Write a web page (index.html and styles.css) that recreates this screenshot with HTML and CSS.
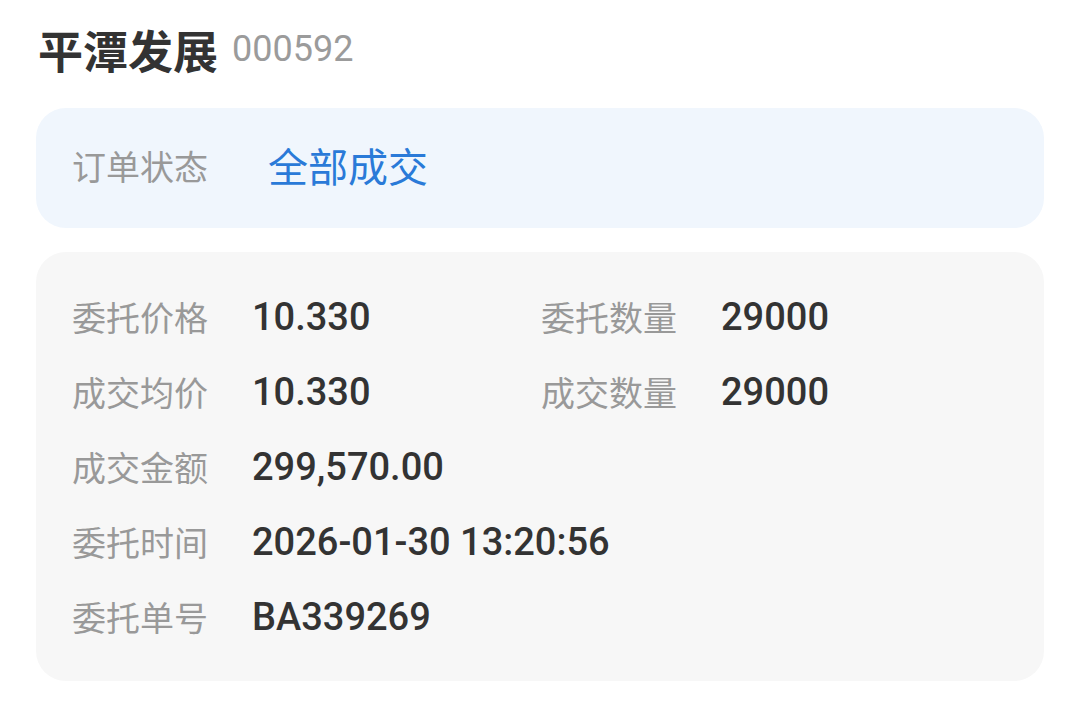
FILE: index.html
```html
<!DOCTYPE html>
<html>
<head>
  <meta charset="utf-8">
  <title>委托详情</title>
  <link rel="stylesheet" href="styles.css">
</head>
<body>

  <div class="stock-title">
    <span class="stock-name">平潭发展</span>
    <span class="stock-code">000592</span>
  </div>

  <div class="status-card">
    <span class="label">订单状态</span>
    <span class="status-value">全部成交</span>
  </div>

  <div class="detail-card">
    <div class="row">
      <div class="item"><span class="label">委托价格</span><span class="value">10.330</span></div>
      <div class="item"><span class="label">委托数量</span><span class="value">29000</span></div>
    </div>
    <div class="row">
      <div class="item"><span class="label">成交均价</span><span class="value">10.330</span></div>
      <div class="item"><span class="label">成交数量</span><span class="value">29000</span></div>
    </div>
    <div class="row">
      <div class="item"><span class="label">成交金额</span><span class="value">299,570.00</span></div>
    </div>
    <div class="row">
      <div class="item"><span class="label">委托时间</span><span class="value">2026-01-30 13:20:56</span></div>
    </div>
    <div class="row">
      <div class="item"><span class="label">委托单号</span><span class="value">BA339269</span></div>
    </div>
  </div>

</body>
</html>
```

FILE: styles.css
```css
body {
  margin: 0;
  padding: 19px 36px 0;
  background-color: #ffffff;
  font-family: Roboto, "Noto Sans CJK SC", sans-serif;
  color: #333;
}

.stock-title {
  display: flex;
  align-items: center;
  height: 60px;
  padding-left: 2px;
}

.stock-name {
  font-size: 45px;
  font-weight: bold;
  color: #333;
}

.stock-code {
  margin-left: 14px;
  font-size: 36px;
  color: #9b9b9b;
}

.status-card {
  display: flex;
  align-items: center;
  height: 120px;
  box-sizing: border-box;
  margin-top: 29px;
  padding: 0 36px 6px;
  background-color: #f0f6fd;
  border-radius: 30px;
}

.label {
  width: 180px;
  flex-shrink: 0;
  font-size: 34px;
  color: #999;
}

.status-card .label {
  width: 196px;
}

.status-value {
  font-size: 40px;
  color: #2a7ad8;
}

.detail-card {
  margin-top: 24px;
  padding: 27px 36px 27px;
  background-color: #f7f7f7;
  border-radius: 30px;
}

.row {
  display: grid;
  grid-template-columns: 469px 1fr;
  height: 75px;
  align-items: center;
}

.item {
  display: flex;
  align-items: center;
}

.value {
  font-size: 38px;
  font-weight: 500;
  color: #333;
  white-space: nowrap;
}
```
